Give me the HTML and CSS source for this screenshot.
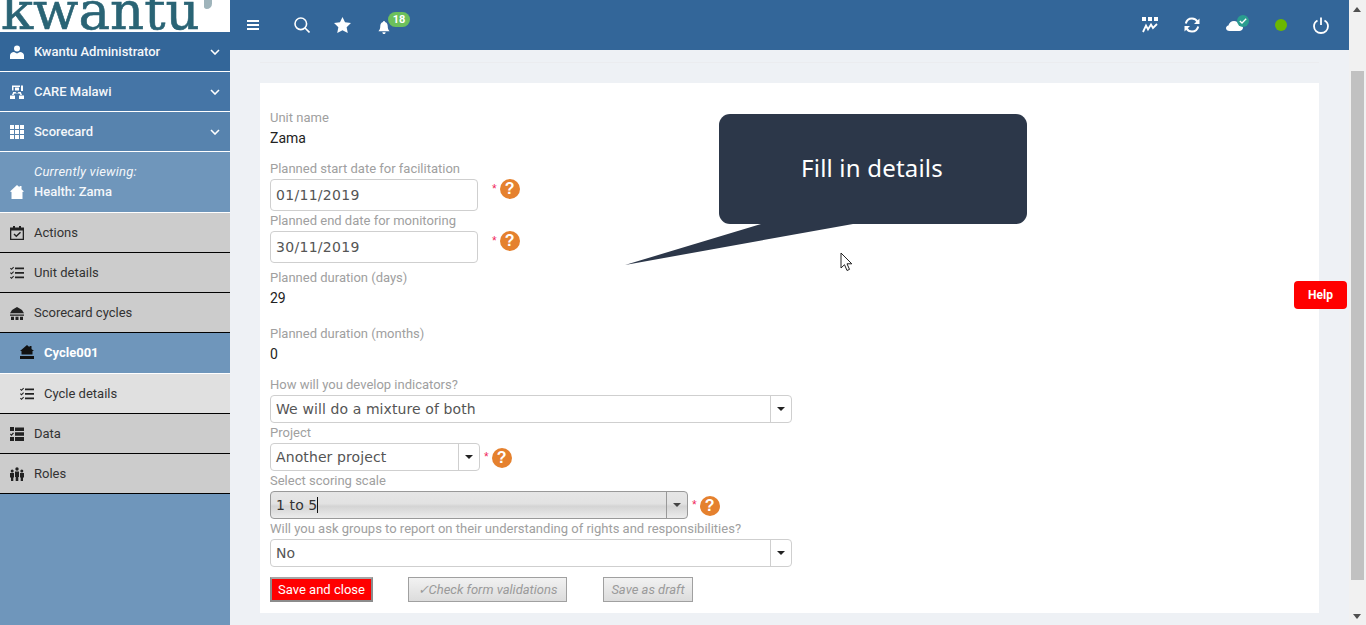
FILE: index.html
```html
<!DOCTYPE html>
<html lang="en">

<head>
  <title>Kwantu</title>
  <meta name="viewport" content="width=device-width, initial-scale=1">
  <link rel="stylesheet" href="styles.css">
</head>

<body>
  <div id="app">

    <!-- Sidebar -->
    <div class="sidebar">
      <div class="logo">
        <span class="logo-text">kwantu</span>
        <span class="logo-mark"></span>
      </div>

      <div class="nav-row blue-1">
        <svg class="nav-icon" viewBox="0 0 14 14"><circle cx="7" cy="3.4" r="3"/><path d="M0 14V10.5C0 8.2 2 7.2 4 7L7 8.4 10 7C12 7.2 14 8.2 14 10.5V14Z"/></svg>
        <span class="nav-label">Kwantu Administrator</span>
        <svg class="chevron" viewBox="0 0 10 6"><path d="M1 1L5 5 9 1"/></svg>
      </div>
      <div class="nav-row blue-2">
        <svg class="nav-icon" viewBox="0 0 14 14"><path d="M2 .5H10V2H3.5V5.5H2ZM11 .5H13V6H11ZM5 2.5H9V5.5H5ZM3.2 7H5.5L7 8.5 8.5 7H10.8L12 10H10.5L9.5 8.5H4.5L3.5 10H2ZM0 10.5H5V14H0ZM9 10.5H14V14H9Z"/></svg>
        <span class="nav-label">CARE Malawi</span>
        <svg class="chevron" viewBox="0 0 10 6"><path d="M1 1L5 5 9 1"/></svg>
      </div>
      <div class="nav-row blue-3">
        <svg class="nav-icon" viewBox="0 0 14 14"><path d="M0 0H4V4H0ZM5 0H9V4H5ZM10 0H14V4H10ZM0 5H4V9H0ZM5 5H9V9H5ZM10 5H14V9H10ZM0 10H4V14H0ZM5 10H9V14H5ZM10 10H14V14H10Z"/></svg>
        <span class="nav-label">Scorecard</span>
        <svg class="chevron" viewBox="0 0 10 6"><path d="M1 1L5 5 9 1"/></svg>
      </div>
      <div class="nav-viewing">
        <svg class="nav-icon" viewBox="0 0 14 14"><path d="M7 0L9.500 2.300V1H11.500V4.200L14 6.500 12.500 7V14H1.500V7L0 6.500Z"/></svg>
        <div class="viewing-text">
          <em>Currently viewing:</em>
          <span>Health: Zama</span>
        </div>
      </div>

      <div class="nav-row grey">
        <svg class="nav-icon dark" viewBox="0 0 14 14"><path d="M3 0H5V1.500H9V0H11V1.500H14V14H0V1.500H3ZM1.300 4.500V12.700H12.700V4.500ZM10 5.800L11 6.800 6.300 11.200 3.500 8.500 4.500 7.500 6.300 9.200Z"/></svg>
        <span class="nav-label">Actions</span>
      </div>
      <div class="nav-row grey">
        <svg class="nav-icon dark" viewBox="0 0 14 14"><path d="M5 1.500H14V3.200H5ZM5 6H14V7.700H5ZM5 10.500H14V12.200H5ZM.7 1.800L1.500 2.500 3.300 .7 4 1.400 1.500 3.900 0 2.500ZM.7 6.300L1.500 7 3.300 5.200 4 5.900 1.500 8.400 0 7ZM.7 10.800L1.500 11.500 3.300 9.700 4 10.400 1.500 12.900 0 11.500Z"/></svg>
        <span class="nav-label">Unit details</span>
      </div>
      <div class="nav-row grey">
        <svg class="nav-icon dark" viewBox="0 0 14 14"><path d="M7 1L10 2.800 12 4 14 7.200H0L2 4 4 2.800ZM0 8.500H14V9.800H0ZM1 10.800H4V14H1ZM5.500 10.800H8.500V14H5.500ZM10 10.800H13V14H10Z"/></svg>
        <span class="nav-label">Scorecard cycles</span>
      </div>
      <div class="nav-row cycle">
        <svg class="nav-icon" viewBox="0 0 14 14"><path d="M7 0L9.500 2.200V1H11.500V3.900L14 6H12.500V9.500H1.500V6H0ZM0 11H14V14H0Z"/></svg>
        <span class="nav-label">Cycle001</span>
      </div>
      <div class="nav-row light">
        <svg class="nav-icon dark" viewBox="0 0 14 14"><path d="M5 1.500H14V3.200H5ZM5 6H14V7.700H5ZM5 10.500H14V12.200H5ZM.7 1.800L1.500 2.500 3.300 .7 4 1.400 1.500 3.900 0 2.500ZM.7 6.300L1.500 7 3.300 5.200 4 5.900 1.500 8.400 0 7ZM.7 10.800L1.500 11.500 3.300 9.700 4 10.400 1.500 12.900 0 11.500Z"/></svg>
        <span class="nav-label">Cycle details</span>
      </div>
      <div class="nav-row grey">
        <svg class="nav-icon dark" viewBox="0 0 14 14"><path d="M0 0H4V4H0ZM5 .5H14V4H5ZM5 5.300H14V8.700H5ZM5 10H14V14H5ZM0 10H4V14H0ZM.5 6.500L1.500 7.300 3 5.500 4 6.300 1.500 9 0 7.500Z"/></svg>
        <span class="nav-label">Data</span>
      </div>
      <div class="nav-row grey">
        <svg class="nav-icon dark" viewBox="0 0 14 14"><circle cx="2.200" cy="4" r="1.500"/><circle cx="7" cy="2" r="1.700"/><circle cx="11.800" cy="4" r="1.500"/><path d="M0 6H4V10.500H3.300V14H1V10.500H0ZM5 4.500H9V10H8.300V14H5.700V10H5ZM10 6H14V10.500H13V14H10.700V10.500H10Z"/></svg>
        <span class="nav-label">Roles</span>
      </div>
    </div>

    <!-- Main area -->
    <div class="main">
      <div class="topbar">
        <svg class="tb-icon menu" viewBox="0 0 12 10"><path d="M0 0H12V2H0ZM0 4H12V6H0ZM0 8H12V10H0Z"/></svg>
        <svg class="tb-icon search" viewBox="0 0 16 16"><circle cx="6.800" cy="6.800" r="5.800"/><path d="M11 11L15.500 15.500"/></svg>
        <svg class="tb-icon star" viewBox="0 0 18 17"><path d="M9 0L11.700 5.700 18 6.500 13.400 10.800 14.600 17 9 14 3.400 17 4.600 10.800 0 6.500 6.300 5.700Z"/></svg>
        <div class="bell">
          <svg class="tb-icon" viewBox="0 0 12 14"><path d="M6 0C6.800 0 7 .5 7 1.200 9 1.700 10 3.500 10 5.500 10 8.500 10.800 9.800 12 11H0C1.200 9.800 2 8.500 2 5.500 2 3.500 3 1.700 5 1.200 5 .5 5.200 0 6 0ZM4.200 12H7.800C7.600 13.300 6.900 14 6 14S4.400 13.300 4.200 12Z"/></svg>
          <span class="badge">18</span>
        </div>

        <div class="tb-right">
          <svg class="tb-icon stats" viewBox="0 0 16 16"><path d="M0 0H4V4H0ZM6 0H10V4H6ZM12 0H16V4H12Z"/><path class="zig" d="M1 15L4 8.500 6 12.500 9 7.500 11 11 15 7"/></svg>
          <svg class="tb-icon sync" viewBox="0 0 16 16"><path class="line" d="M1.800 6.500C2.500 3.500 5 1.500 8 1.500 10.500 1.500 12.500 2.800 13.500 4.800"/><path d="M15.500 1.500V7H10Z"/><path class="line" d="M14.200 9.500C13.500 12.500 11 14.500 8 14.500 5.500 14.500 3.500 13.200 2.500 11.200"/><path d="M.5 14.500V9H6Z"/></svg>
          <div class="cloud">
            <svg class="tb-icon" viewBox="0 0 17 10"><path d="M3.500 10C1.500 10 0 8.800 0 7.200 0 5.800 1 4.800 2.400 4.500 3 2 5.300 0 8 0 10.500 0 12.200 1.500 13 3.400 15.300 3.500 17 5 17 6.800 17 8.700 15.300 10 13.300 10Z"/></svg>
            <span class="cloud-check"><svg viewBox="0 0 8 6"><path d="M.8 3L3 5 7.200 .8"/></svg></span>
          </div>
          <span class="status-dot"></span>
          <svg class="tb-icon power" viewBox="0 0 16 17"><path d="M4.500 3.500C2.300 4.700 1 6.800 1 9.200 1 13 4.100 16 8 16S15 13 15 9.200C15 6.800 13.700 4.700 11.500 3.500"/><path d="M8 .5V8"/></svg>
        </div>
      </div>

      <div class="content">
        <div class="top-rule"></div>
        <div class="card">
          <div class="field static">
            <label>Unit name</label>
            <div class="value">Zama</div>
          </div>

          <div class="field">
            <label>Planned start date for facilitation</label>
            <div class="control-row">
              <div class="input date">01/11/2019</div>
              <span class="req date-req">*</span>
              <span class="help-q date-q">?</span>
            </div>
          </div>
          <div class="field">
            <label>Planned end date for monitoring</label>
            <div class="control-row">
              <div class="input date">30/11/2019</div>
              <span class="req date-req">*</span>
              <span class="help-q date-q">?</span>
            </div>
          </div>

          <div class="field static duration">
            <label>Planned duration (days)</label>
            <div class="value">29</div>
          </div>
          <div class="field static months">
            <label>Planned duration (months)</label>
            <div class="value">0</div>
          </div>

          <div class="field">
            <label>How will you develop indicators?</label>
            <div class="control-row">
              <div class="select wide">
                <span class="select-text">We will do a mixture of both</span>
                <span class="select-arrow"></span>
              </div>
            </div>
          </div>
          <div class="field">
            <label>Project</label>
            <div class="control-row">
              <div class="select project">
                <span class="select-text">Another project</span>
                <span class="select-arrow"></span>
              </div>
              <span class="req">*</span>
              <span class="help-q">?</span>
            </div>
          </div>
          <div class="field">
            <label>Select scoring scale</label>
            <div class="control-row">
              <div class="select scale focused">
                <span class="select-text">1 to 5<i class="caret"></i></span>
                <span class="select-arrow"></span>
              </div>
              <span class="req">*</span>
              <span class="help-q">?</span>
            </div>
          </div>
          <div class="field">
            <label>Will you ask groups to report on their understanding of rights and responsibilities?</label>
            <div class="control-row">
              <div class="select wide">
                <span class="select-text">No</span>
                <span class="select-arrow"></span>
              </div>
            </div>
          </div>

          <div class="actions">
            <button class="btn-save">Save and close</button>
            <button class="btn-muted btn-check">&#10003;Check form validations</button>
            <button class="btn-muted btn-draft">Save as draft</button>
          </div>
        </div>
      </div>
    </div>

    <!-- Scrollbar -->
    <div class="scrollbar">
      <span class="arrow-up"></span>
      <span class="thumb"></span>
      <span class="arrow-down"></span>
    </div>
  </div>

  <!-- Overlays -->
  <button class="help-btn">Help</button>

  <div class="bubble">Fill in details</div>
  <svg class="bubble-tail" viewBox="0 0 230 42"><path d="M136 0L0 41 228 0Z"/></svg>

  <svg class="pointer" viewBox="0 0 13 20"><path d="M1 1V16L4.500 12.700 7 18.500 9.500 17.400 7 11.800H11.800Z"/></svg>
</body>

</html>
```

FILE: styles.css
```css
* {
  box-sizing: border-box;
  margin: 0;
  padding: 0;
}

html,
body {
  height: 625px;
  overflow: hidden;
}

body {
  font-family: Roboto, 'Liberation Sans', Arial, sans-serif;
  background: #eef1f5;
}

#app {
  display: flex;
  height: 625px;
}

/* Sidebar */
.sidebar {
  width: 230px;
  flex-shrink: 0;
  background: #6f96bb;
}

.logo {
  position: relative;
  height: 32px;
  background: white;
  overflow: hidden;
}

.logo-text {
  position: absolute;
  left: 1px;
  top: -17px;
  font-family: 'DejaVu Serif', serif;
  font-size: 53px;
  line-height: 56px;
  color: #2a6475;
  -webkit-text-stroke: 0.6px #2a6475;
}

.logo-mark {
  position: absolute;
  left: 204px;
  top: -2px;
  width: 8px;
  height: 11px;
  border-radius: 0 0 6px 3px;
  background: #9fb4bb;
}

.nav-row {
  display: flex;
  align-items: center;
  height: 40px;
  padding-left: 10px;
  font-size: 13px;
  border-bottom: 1px solid #000;
  color: #333;
}

.nav-icon {
  width: 14px;
  height: 14px;
  margin-right: 10px;
  flex-shrink: 0;
  fill: white;
}

.nav-icon.dark {
  fill: #222;
}

.blue-1,
.blue-2,
.blue-3 {
  color: #f4f7fa;
  font-weight: 500;
  border-bottom-color: white;
}

.blue-1 {
  background: #336699;
}

.blue-2 {
  background: #4575a6;
}

.blue-3 {
  background: #5783ae;
}

.chevron {
  width: 10px;
  height: 6px;
  margin-left: auto;
  margin-right: 10px;
  fill: none;
  stroke: white;
  stroke-width: 1.6;
}

.nav-viewing {
  display: flex;
  align-items: flex-end;
  height: 61px;
  padding: 0 10px 13px;
  background: #6f96bb;
  border-bottom: 1px solid white;
  color: #f4f7fa;
  font-size: 13px;
}

.viewing-text {
  display: flex;
  flex-direction: column;
  gap: 5px;
  line-height: 15px;
  font-weight: 500;
}

.viewing-text em {
  font-weight: 400;
  letter-spacing: 0.2px;
}

.grey {
  background: #cccccc;
}

.cycle {
  height: 41px;
  padding-left: 20px;
  padding-bottom: 2px;
  background: #6f96bb;
  color: white;
  font-weight: 700;
  border-bottom: 1px solid white;
}

.cycle .nav-icon {
  fill: #111;
}

.light {
  padding-left: 20px;
  background: #e0e0e0;
}

/* Top bar */
.main {
  flex: 1;
  display: flex;
  flex-direction: column;
  min-width: 0;
}

.topbar {
  display: flex;
  align-items: center;
  height: 50px;
  flex-shrink: 0;
  background: #336699;
}

.tb-icon {
  display: block;
  fill: white;
}

.menu {
  width: 12px;
  height: 10px;
  margin-left: 17px;
}

.search {
  width: 16px;
  height: 16px;
  margin-left: 35px;
  margin-top: -1px;
  fill: none;
  stroke: white;
  stroke-width: 1.600;
}

.star {
  width: 17px;
  height: 16px;
  margin-left: 24px;
}

.bell {
  position: relative;
  width: 12px;
  height: 13px;
  margin-left: 27px;
  margin-top: 5px;
}

.bell svg {
  width: 12px;
  height: 13px;
}

.badge {
  position: absolute;
  left: 10px;
  top: -9px;
  width: 22px;
  height: 15px;
  border-radius: 8px;
  background: #6cc05c;
  color: white;
  font-size: 11px;
  font-weight: 700;
  line-height: 15px;
  text-align: center;
}

.tb-right {
  display: flex;
  align-items: center;
  margin-left: auto;
  padding-right: 20px;
}

.stats {
  width: 16px;
  height: 16px;
}

.stats .zig {
  fill: none;
  stroke: white;
  stroke-width: 1.800;
}

.sync {
  width: 16px;
  height: 16px;
  margin-left: 26px;
}

.sync .line {
  fill: none;
  stroke: white;
  stroke-width: 2;
}

.cloud {
  position: relative;
  width: 17px;
  height: 10px;
  margin-left: 26px;
  margin-top: 2px;
}

.cloud svg {
  width: 17px;
  height: 10px;
}

.cloud-check {
  position: absolute;
  left: 11px;
  top: -6px;
  display: flex;
  align-items: center;
  justify-content: center;
  width: 12px;
  height: 12px;
  border-radius: 50%;
  background: #2a9d8f;
}

.cloud-check svg {
  width: 8px;
  height: 6px;
  fill: none;
  stroke: white;
  stroke-width: 1.300;
}

.status-dot {
  width: 12px;
  height: 12px;
  margin-left: 32px;
  margin-top: -1px;
  border-radius: 50%;
  background: #6bb700;
}

.power {
  width: 16px;
  height: 17px;
  margin-left: 26px;
  fill: none;
  stroke: white;
  stroke-width: 1.800;
}

/* Form card */
.content {
  flex: 1;
  padding: 12px 30px;
}

.top-rule {
  width: 1059px;
  height: 1px;
  margin-bottom: 20px;
  background: #ebecef;
}

.card {
  width: 1059px;
  height: 530px;
  padding: 26px 10px 0;
  background: white;
}

.field {
  margin-bottom: 1px;
}

.field label {
  display: block;
  height: 16px;
  margin-bottom: 3px;
  font-size: 13px;
  line-height: 18px;
  color: #a0a0a0;
}

.field.static label {
  margin-bottom: 5px;
}

.value {
  height: 16px;
  font-size: 14px;
  line-height: 16px;
  color: #222;
}

.static {
  margin-bottom: 14px;
}

.duration {
  margin-top: 6px;
  margin-bottom: 19px;
}

.months {
  margin-bottom: 14px;
}

.control-row {
  display: flex;
  align-items: center;
}

.input,
.select {
  font-family: 'DejaVu Sans', Verdana, sans-serif;
  font-size: 14px;
  color: #555;
  background: white;
  border: 1px solid #cfcfcf;
  border-radius: 4px;
}

.input {
  width: 208px;
  height: 32px;
  padding: 0 5px;
  line-height: 30px;
  letter-spacing: 0.3px;
}

.select {
  display: flex;
  height: 28px;
  line-height: 26px;
  letter-spacing: 0.1px;
}

.wide {
  width: 522px;
}

.project {
  width: 210px;
}

.scale {
  width: 418px;
}

.select-text {
  flex: 1;
  padding-left: 5px;
  white-space: nowrap;
}

.select-arrow {
  display: flex;
  align-items: center;
  justify-content: center;
  width: 21px;
  border-left: 1px solid #cfcfcf;
}

.select-arrow::after {
  content: "";
  border-left: 4px solid transparent;
  border-right: 4px solid transparent;
  border-top: 4px solid #222;
}

.focused {
  border-color: #999;
  background: linear-gradient(#e6e6e6 0, #e2e2e2 45%, #d4d4d4 55%, #ececec 100%);
  color: #333;
}

.focused .select-arrow {
  border-left-color: #999;
}

.focused .select-arrow::after {
  border-top-color: #444;
}

.caret {
  display: inline-block;
  width: 1px;
  height: 16px;
  vertical-align: -3px;
  background: #111;
}

.req {
  margin-left: 4px;
  align-self: flex-start;
  padding-top: 7px;
  font-family: 'Liberation Sans', Arial, sans-serif;
  font-size: 12px;
  line-height: 14px;
  color: #f0245a;
}

.date-req {
  margin-left: 14px;
  padding-top: 3px;
}

.help-q {
  display: block;
  width: 20px;
  height: 20px;
  margin-left: 3px;
  margin-top: 2px;
  border-radius: 50%;
  background: #e5812e;
  color: white;
  font-family: 'Liberation Sans', Arial, sans-serif;
  font-size: 16px;
  font-weight: 700;
  line-height: 20px;
  text-align: center;
}

.date-q {
  align-self: flex-start;
  margin-top: 0;
}

.actions {
  display: flex;
  margin-top: 10px;
}

.actions button {
  height: 25px;
  font-family: Roboto, 'Liberation Sans', Arial, sans-serif;
  font-size: 13px;
}

.btn-save {
  width: 103px;
  background: red;
  color: white;
  border: 2px solid #8c8c8c;
  border-top-color: #a6a6a6;
}

.btn-muted {
  background: linear-gradient(#f2f2f2, #dcdcdc);
  color: #9a9a9a;
  font-style: italic;
  border: 1px solid #a0a0a0;
}

.btn-check {
  width: 159px;
  margin-left: 35px;
}

.btn-draft {
  width: 90px;
  margin-left: 36px;
}

/* Scrollbar */
.scrollbar {
  position: relative;
  width: 17px;
  flex-shrink: 0;
  background: #f1f1f1;
}

.thumb {
  position: absolute;
  left: 2px;
  top: 71px;
  width: 13px;
  height: 509px;
  background: #c1c1c1;
}

.arrow-up,
.arrow-down {
  position: absolute;
  left: 4px;
  border-left: 4px solid transparent;
  border-right: 4px solid transparent;
}

.arrow-up {
  top: 7px;
  border-bottom: 5px solid #505050;
}

.arrow-down {
  bottom: 6px;
  border-top: 5px solid #505050;
}

/* Overlays */
.help-btn {
  position: absolute;
  left: 1294px;
  top: 281px;
  width: 53px;
  height: 28px;
  border: none;
  border-radius: 4px;
  background: red;
  color: white;
  font-family: Roboto, 'Liberation Sans', Arial, sans-serif;
  font-size: 12px;
  font-weight: 700;
}

.bubble {
  position: absolute;
  left: 719px;
  top: 114px;
  width: 308px;
  height: 110px;
  padding-right: 2px;
  border-radius: 11px;
  background: #2c3749;
  color: white;
  font-family: 'Noto Sans', sans-serif;
  font-size: 24px;
  letter-spacing: 0.2px;
  line-height: 108px;
  text-align: center;
}

.bubble-tail {
  position: absolute;
  left: 625px;
  top: 224px;
  width: 230px;
  height: 42px;
  fill: #2c3749;
}

.pointer {
  position: absolute;
  left: 840px;
  top: 252px;
  width: 13px;
  height: 20px;
  fill: white;
  stroke: #222;
  stroke-width: 1;
}
```
